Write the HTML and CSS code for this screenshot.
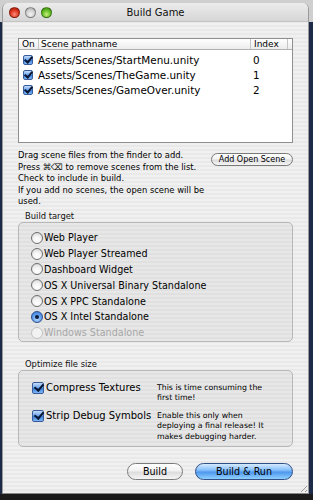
FILE: index.html
```html
<!DOCTYPE html>
<html>
<head>
<meta charset="utf-8">
<link rel="stylesheet" href="styles.css">
</head>
<body>
<div class="screen">
  <div class="window">
    <div class="titlebar">
      <div class="lights">
        <span class="light red"></span>
        <span class="light grey"></span>
        <span class="light green"></span>
      </div>
      <div class="title">Build Game</div>
    </div>
    <div class="content">
      <div class="table">
        <div class="thead">
          <div class="th c-on">On</div>
          <div class="th c-path">Scene pathname</div>
          <div class="th c-idx">Index</div>
          <div class="th c-end"></div>
        </div>
        <div class="tbody">
          <div class="tr"><span class="cb small checked"></span><span class="path">Assets/Scenes/StartMenu.unity</span><span class="idx">0</span></div>
          <div class="tr"><span class="cb small checked"></span><span class="path">Assets/Scenes/TheGame.unity</span><span class="idx">1</span></div>
          <div class="tr"><span class="cb small checked"></span><span class="path">Assets/Scenes/GameOver.unity</span><span class="idx">2</span></div>
        </div>
      </div>

      <div class="info">
        <p class="help">Drag scene files from the finder to add.<br>Press ⌘⌫ to remove scenes from the list.<br>Check to include in build.<br>If you add no scenes, the open scene will be used.</p>
        <button class="btn small-btn">Add Open Scene</button>
      </div>

      <div class="group-label">Build target</div>
      <div class="group targets">
        <div class="radio-row"><span class="radio"></span>Web Player</div>
        <div class="radio-row"><span class="radio"></span>Web Player Streamed</div>
        <div class="radio-row"><span class="radio"></span>Dashboard Widget</div>
        <div class="radio-row"><span class="radio"></span>OS X Universal Binary Standalone</div>
        <div class="radio-row"><span class="radio"></span>OS X PPC Standalone</div>
        <div class="radio-row"><span class="radio on"></span>OS X Intel Standalone</div>
        <div class="radio-row disabled"><span class="radio"></span>Windows Standalone</div>
      </div>

      <div class="group-label">Optimize file size</div>
      <div class="group opts">
        <div class="opt-row">
          <div class="opt-label"><span class="cb checked"></span>Compress Textures</div>
          <div class="opt-desc">This is time consuming the<br>first time!</div>
        </div>
        <div class="opt-row">
          <div class="opt-label"><span class="cb checked"></span>Strip Debug Symbols</div>
          <div class="opt-desc">Enable this only when<br>deploying a final release! It<br>makes debugging harder.</div>
        </div>
      </div>

      <div class="actions">
        <button class="btn build">Build</button>
        <button class="btn default">Build &amp; Run</button>
      </div>
    </div>
    <div class="grip"></div>
  </div>
</div>
</body>
</html>
```

FILE: styles.css
```css
* { box-sizing: border-box; }
html, body { margin: 0; padding: 0; }
body {
  width: 313px;
  height: 500px;
  overflow: hidden;
  font-family: "DejaVu Sans", sans-serif;
  color: #000;
}
.screen {
  width: 313px;
  height: 500px;
  padding: 3px 4px 6px 2px;
  background:
    linear-gradient(to bottom, #cfcfcf 0, #cfcfcf 22px, transparent 22px),
    linear-gradient(to bottom, #1e2b48 0, #1e2b48 494px, #1b1b1b 494px);
}
.window {
  position: relative;
  width: 307px;
  height: 491px;
  border-radius: 6px 6px 0 0;
  overflow: hidden;
  background: repeating-linear-gradient(to bottom, #f0f0f0 0, #f0f0f0 2px, #e9e9e9 2px, #e9e9e9 4px);
  border-left: 1px solid #9a9a9a;
  border-right: 1px solid #9a9a9a;
  border-bottom: 1px solid #888;
  display: flex;
  flex-direction: column;
}
.titlebar {
  height: 19px;
  flex: none;
  position: relative;
  display: flex;
  align-items: center;
  background: linear-gradient(to bottom, #ececec, #d6d6d6);
  border-bottom: 1px solid #c4c4c4;
}
.lights {
  display: flex;
  gap: 5px;
  padding-left: 6px;
  position: relative;
  z-index: 1;
}
.light {
  width: 11px;
  height: 11px;
  border-radius: 50%;
  border: 1px solid rgba(0,0,0,0.35);
}
.light.red { background: radial-gradient(circle at 50% 70%, #ff8a78 0, #d8321c 55%, #a91a0a 100%); }
.light.grey { background: radial-gradient(circle at 50% 70%, #f4f4f4 0, #cfcfcf 55%, #9f9f9f 100%); }
.light.green { background: radial-gradient(circle at 50% 70%, #c8f07a 0, #5fb923 55%, #3c8a12 100%); }
.title {
  position: absolute;
  left: 0; right: 0; top: 0; bottom: 0;
  display: flex;
  align-items: center;
  justify-content: center;
  font-size: 10px;
  color: #111;
}
.content {
  padding: 16px 15px 0 15px;
  display: flex;
  flex-direction: column;
}
.table {
  height: 105px;
  background: #fff;
  border: 1px solid #8f8f8f;
}
.thead {
  display: flex;
  height: 11px;
  border-bottom: 1px solid #b0b0b0;
  background: linear-gradient(to bottom, #ffffff, #ececec);
}
.th {
  font-size: 9px;
  line-height: 10px;
  padding-left: 3px;
  border-right: 1px solid #c6c6c6;
  white-space: nowrap;
}
.c-on { width: 20px; }
.c-path { width: 212px; padding-left: 2px; }
.c-idx { width: 37px; padding-left: 3px; }
.c-end { flex: 1; border-right: none; }
.tbody { padding-top: 2px; }
.tr {
  display: flex;
  align-items: center;
  height: 15px;
  font-size: 10.4px;
}
.tr .cb { margin-left: 4px; margin-right: 5px; }
.tr .path { width: 212px; }
.tr .idx { padding-left: 3px; }

.cb {
  display: inline-block;
  flex: none;
  width: 12px;
  height: 12px;
  border: 1px solid #3a5c9a;
  border-radius: 2px;
  background: linear-gradient(to bottom, #c5dcfa 0, #6fa7ee 45%, #3a7fdc 55%, #7fb6f4 100%);
  position: relative;
}
.cb.small { width: 10px; height: 10px; }
.cb.checked::after {
  content: "";
  position: absolute;
  left: 3px;
  top: -1px;
  width: 4px;
  height: 7px;
  border: solid #0b1733;
  border-width: 0 2px 2px 0;
  transform: rotate(40deg);
}
.cb.small.checked::after { left: 2px; top: -1px; width: 3px; height: 6px; }

.info {
  display: flex;
  align-items: flex-start;
  justify-content: space-between;
  margin-top: 7px;
}
.help {
  margin: 0;
  width: 192px;
  font-size: 8.4px;
  line-height: 11.6px;
}
.btn {
  font-family: "DejaVu Sans", sans-serif;
  color: #000;
  border: 1px solid #7a7a7a;
  border-radius: 8px;
  background: linear-gradient(to bottom, #ffffff 0, #f2f2f2 45%, #dcdcdc 55%, #f6f6f6 100%);
  padding: 0;
  margin: 0;
  white-space: nowrap;
}
.small-btn {
  width: 82px;
  height: 13px;
  margin-top: 3px;
  font-size: 8px;
  line-height: 11px;
}
.group-label {
  font-size: 8.4px;
  line-height: 12px;
  padding-left: 7px;
  margin-top: 2px;
  color: #111;
}
.group {
  border: 1px solid #b7b7b7;
  border-radius: 5px;
  background: rgba(0,0,0,0.035);
}
.targets {
  height: 120px;
  padding: 7px 0 0 12px;
}
.radio-row {
  display: flex;
  align-items: center;
  height: 15.8px;
  font-size: 9.6px;
}
.radio-row.disabled { color: #a8a8a8; }
.radio {
  width: 12px;
  height: 12px;
  border-radius: 50%;
  border: 1px solid #6e6e6e;
  background: radial-gradient(circle at 50% 75%, #ffffff 0, #f4f4f4 45%, #cfcfcf 100%);
  margin-right: 1px;
  position: relative;
  flex: none;
}
.radio.on {
  border-color: #2d4f8c;
  background: radial-gradient(circle at 50% 70%, #b7d7fb 0, #5c9ced 55%, #2f6fcf 100%);
}
.radio.on::after {
  content: "";
  position: absolute;
  left: 3px; top: 3px;
  width: 4px; height: 4px;
  border-radius: 50%;
  background: #0c1a3a;
}
.disabled .radio { border-color: #c2c2c2; background: #f2f2f2; }

.targets + .group-label { margin-top: 16px; }
.opts {
  height: 77px;
  padding: 11px 0 0 13px;
  display: flex;
  flex-direction: column;
  gap: 6px;
}
.opt-row {
  display: flex;
  align-items: flex-start;
}
.opt-label {
  width: 125px;
  display: flex;
  align-items: center;
  font-size: 10px;
  line-height: 12px;
  white-space: nowrap;
}
.opt-label .cb { margin-right: 2px; }
.opt-desc {
  font-size: 7.8px;
  line-height: 10.5px;
  margin-top: 1px;
  white-space: nowrap;
}
.actions {
  display: flex;
  justify-content: flex-end;
  gap: 12px;
  margin-top: 16px;
}
.actions .btn {
  height: 17px;
  border-radius: 9px;
  font-size: 9.6px;
}
.build { width: 56px; }
.default {
  width: 98px;
  border-color: #2f4f86;
  background: linear-gradient(to bottom, #d6ebff 0, #86c0fb 40%, #4f98ee 55%, #8fd0ff 100%);
}
.grip {
  position: absolute;
  right: 1px;
  bottom: 1px;
  width: 9px;
  height: 9px;
  background: repeating-linear-gradient(135deg, transparent 0, transparent 2px, #9a9a9a 2px, #9a9a9a 3px);
  clip-path: polygon(100% 0, 100% 100%, 0 100%);
}
```
